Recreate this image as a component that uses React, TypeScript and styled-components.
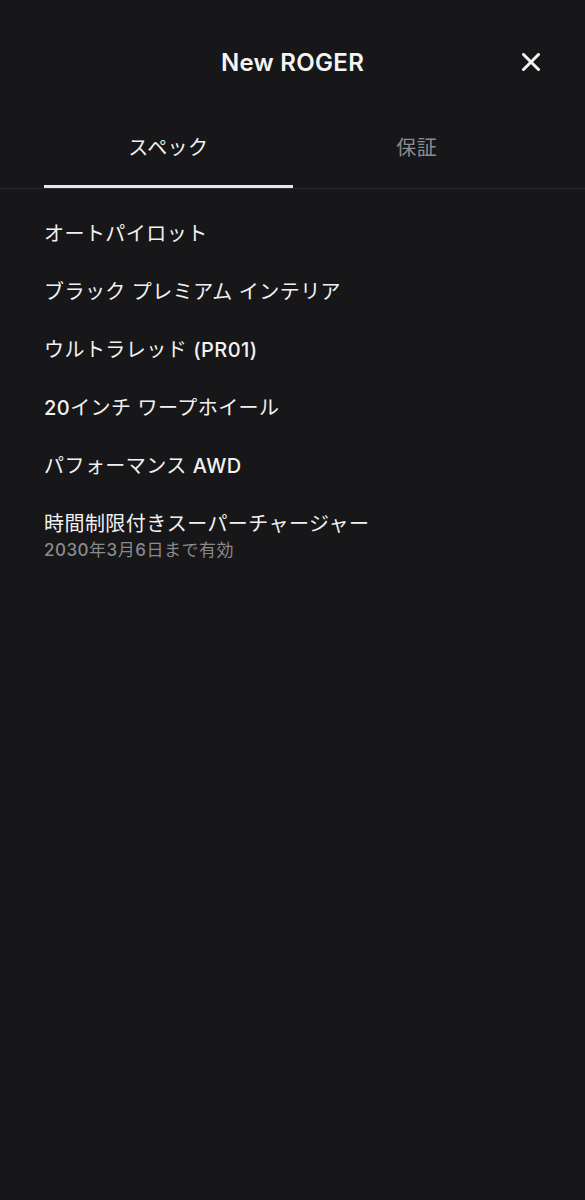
import React from "react";
import styled, { createGlobalStyle } from "styled-components";

const GlobalStyle = createGlobalStyle`
  html, body {
    margin: 0;
    padding: 0;
    background: #171719;
  }
  body {
    font-family: Inter, "Noto Sans CJK JP", sans-serif;
    color: #f2f2f2;
    -webkit-font-smoothing: antialiased;
  }
`;

const Screen = styled.div`
  min-height: 1200px;
  background: #171719;
`;

const Header = styled.header`
  height: 124px;
  display: grid;
  grid-template-columns: 1fr auto 1fr;
  align-items: center;
  padding: 0 45px;
`;

const Title = styled.h1`
  grid-column: 2;
  margin: 0;
  font-family: Inter, sans-serif;
  font-size: 24px;
  font-weight: 600;
  color: #f4f4f4;
  letter-spacing: 0.3px;
`;

const CloseButton = styled.button`
  grid-column: 3;
  justify-self: end;
  width: 18px;
  height: 18px;
  padding: 0;
  border: 0;
  background: none;
  color: #f4f4f4;
  display: flex;
  cursor: pointer;
`;

const TabBar = styled.nav`
  display: flex;
  padding: 0 44px;
  border-bottom: 1px solid #2b2b2d;
`;

const Tab = styled.div<{ $active?: boolean }>`
  flex: 1;
  text-align: center;
  padding: 9px 0 22px;
  line-height: 30px;
  font-size: 20px;
  font-weight: 400;
  letter-spacing: 0.4px;
  color: ${(p) => (p.$active ? "#f2f2f2" : "#8c8c8e")};
  border-bottom: 3px solid ${(p) => (p.$active ? "#e6e6e6" : "transparent")};
`;

const List = styled.ul`
  list-style: none;
  margin: 0;
  padding: 16px 44px 0;
`;

const Item = styled.li`
  padding: 15px 0;
`;

const ItemTitle = styled.div`
  font-size: 20px;
  line-height: 28px;
  letter-spacing: 0.45px;
  color: #f2f2f2;
`;

const ItemSub = styled.div`
  margin-top: 1px;
  font-size: 17px;
  line-height: 22px;
  letter-spacing: 0.5px;
  color: #8a8a8c;
`;

const Latin = styled.span`
  font-weight: 500;
`;

const specs: { title: React.ReactNode; sub?: React.ReactNode }[] = [
  { title: "オートパイロット" },
  { title: "ブラック プレミアム インテリア" },
  { title: <>ウルトラレッド <Latin>(PR01)</Latin></> },
  { title: <><Latin>20</Latin>インチ ワープホイール</> },
  { title: <>パフォーマンス <Latin>AWD</Latin></> },
  {
    title: "時間制限付きスーパーチャージャー",
    sub: (
      <>
        <Latin>2030</Latin>年<Latin>3</Latin>月<Latin>6</Latin>日まで有効
      </>
    ),
  },
];

export default function App() {
  return (
    <Screen>
      <GlobalStyle />
      <Header>
        <Title>New ROGER</Title>
        <CloseButton aria-label="close">
          <svg width="18" height="18" viewBox="0 0 18 18">
            <path
              d="M1.5 1.5 L16.5 16.5 M16.5 1.5 L1.5 16.5"
              stroke="currentColor"
              strokeWidth="3"
              strokeLinecap="round"
            />
          </svg>
        </CloseButton>
      </Header>
      <TabBar>
        <Tab $active>スペック</Tab>
        <Tab>保証</Tab>
      </TabBar>
      <List>
        {specs.map((s, i) => (
          <Item key={i}>
            <ItemTitle>{s.title}</ItemTitle>
            {s.sub && <ItemSub>{s.sub}</ItemSub>}
          </Item>
        ))}
      </List>
    </Screen>
  );
}
